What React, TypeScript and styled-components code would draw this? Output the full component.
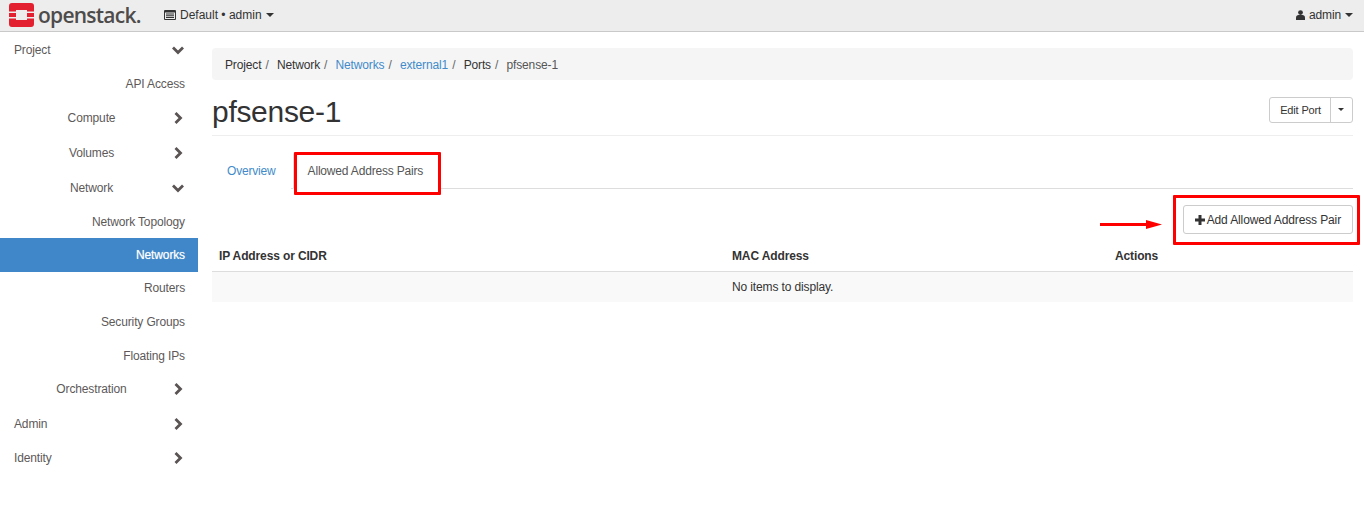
import React from 'react'
import styled, { createGlobalStyle } from 'styled-components'

const GlobalStyle = createGlobalStyle`
  html, body {
    margin: 0;
    padding: 0;
    background: #fff;
    font-family: "Liberation Sans", Arial, sans-serif;
    font-size: 12px;
    letter-spacing: -0.13px;
    color: #333;
  }
  * { box-sizing: border-box; }
`

const Page = styled.div`
  position: relative;
  width: 1364px;
  height: 523px;
  overflow: hidden;
`

const Navbar = styled.header`
  display: flex;
  align-items: center;
  height: 32px;
  padding: 0 11px 2px 9px;
  background: #ededed;
  border-bottom: 1px solid #c9c9c9;
`

const Brand = styled.div`
  display: flex;
  align-items: center;
  gap: 4px;
  width: 155px;
`

const BrandName = styled.span`
  font-family: "Open Sans", sans-serif;
  font-size: 21px;
  font-weight: 600;
  line-height: 28px;
  letter-spacing: -0.75px;
  color: #4e4b4b;
`

const NavMenu = styled.div<{ $push?: boolean }>`
  display: flex;
  align-items: center;
  gap: 4px;
  margin-left: ${(p) => (p.$push ? 'auto' : '0')};
  font-size: 12px;
  color: #333;
`

const ProjectLabel = styled.span`
  letter-spacing: 0;
`

const Caret = styled.span`
  display: inline-block;
  width: 0;
  height: 0;
  border-top: 4px solid #333;
  border-left: 4px solid transparent;
  border-right: 4px solid transparent;
`

const Body = styled.div`
  display: flex;
  align-items: flex-start;
`

const Sidebar = styled.nav`
  width: 198px;
  flex: none;
  padding-top: 1px;
`

const SideItem = styled.div<{ $level: number; $active?: boolean; $h: number }>`
  position: relative;
  height: ${(p) => p.$h}px;
  display: flex;
  align-items: center;
  width: 198px;
  padding-left: ${(p) => (p.$level === 0 ? '14px' : '0')};
  padding-right: ${(p) => (p.$level === 1 ? '15px' : '13px')};
  justify-content: ${(p) =>
    p.$level === 0 ? 'flex-start' : p.$level === 1 ? 'center' : 'flex-end'};
  color: ${(p) => (p.$active ? '#fff' : '#5d5959')};
  text-shadow: ${(p) => (p.$active ? '0 0 1px rgba(255, 255, 255, 0.6)' : 'none')};
  background: ${(p) => (p.$active ? '#3f87c8' : 'transparent')};
`

const Chevron = styled.svg`
  position: absolute;
  right: 14px;
  top: 50%;
  margin-top: -6px;
  width: 12px;
  height: 12px;
  fill: none;
  stroke: #5a5454;
  stroke-width: 2.8;
`

const Main = styled.main`
  flex: 1;
  min-width: 0;
  padding: 16px 11px 0 14px;
`

const Breadcrumb = styled.ol`
  display: flex;
  align-items: center;
  height: 32px;
  margin: 0;
  padding: 1px 13px 0;
  list-style: none;
  background: #f5f5f5;
  border-radius: 4px;
`

const Crumb = styled.li<{ $link?: boolean; $muted?: boolean }>`
  color: ${(p) => (p.$link ? '#428bca' : p.$muted ? '#555' : '#333')};
  &:not(:last-child)::after {
    content: '/';
    color: #666;
    margin: 0 8.25px 0 4px;
  }
`

const TitleRow = styled.div`
  display: flex;
  align-items: center;
  justify-content: space-between;
  height: 56px;
  border-bottom: 1px solid #eee;
`

const Title = styled.h1`
  margin: 8px 0 0;
  font-size: 30px;
  font-weight: 400;
  line-height: 33px;
  letter-spacing: -0.3px;
  color: #333;
`

const SplitButton = styled.div`
  display: flex;
  height: 26px;
  margin-top: 4px;
  border: 1px solid #ccc;
  border-radius: 3px;
  background: #fff;
`

const SplitLabel = styled.span`
  display: flex;
  align-items: center;
  padding: 0 9px 0 10px;
  font-size: 11px;
  letter-spacing: -0.15px;
  border-right: 1px solid #ccc;
`

const SplitCaret = styled.span`
  display: flex;
  align-items: center;
  padding: 0 8px 0 7px;
  ${Caret} {
    border-top-width: 3px;
    border-left-width: 3px;
    border-right-width: 3px;
  }
`

const Tabs = styled.div`
  display: flex;
  height: 37px;
  margin-top: 16px;
  border-bottom: 1px solid #ddd;
  letter-spacing: -0.18px;
`

const Tab = styled.div<{ $active?: boolean }>`
  display: flex;
  align-items: center;
  height: 37px;
  padding: 0 15px 0 ${(p) => (p.$active ? '14px' : '15px')};
  color: ${(p) => (p.$active ? '#555' : '#428bca')};
  background: #fff;
  margin-left: ${(p) => (p.$active ? '2px' : '0')};
  border: ${(p) => (p.$active ? '1px solid #ddd' : 'none')};
  border-bottom: ${(p) => (p.$active ? '1px solid #fff' : 'none')};
  border-radius: 3px 3px 0 0;
`

const Actions = styled.div`
  display: flex;
  justify-content: flex-end;
  height: 50px;
  padding-top: 16px;
`

const ActionButton = styled.button`
  display: flex;
  align-items: center;
  gap: 2px;
  height: 29px;
  padding: 0 11px;
  font: 400 12px "Liberation Sans", Arial, sans-serif;
  letter-spacing: -0.13px;
  color: #333;
  background: #fff;
  border: 1px solid #ccc;
  border-radius: 3px;
`

const Table = styled.table`
  width: 100%;
  table-layout: fixed;
  border-collapse: collapse;
`

const Th = styled.th<{ $w: number }>`
  width: ${(p) => p.$w}px;
  height: 32px;
  padding: 2px 7px 0;
  font-size: 12px;
  font-weight: 700;
  text-align: left;
  color: #333;
  border-bottom: 1px solid #ddd;
`

const EmptyCell = styled.td`
  height: 31px;
  padding: 0 7px;
  background: #f9f9f9;
`

const EmptyText = styled.span`
  display: block;
  margin-left: 513px;
  white-space: nowrap;
`

const Highlight = styled.div<{ $x: number; $y: number; $w: number; $h: number }>`
  position: absolute;
  left: ${(p) => p.$x}px;
  top: ${(p) => p.$y}px;
  width: ${(p) => p.$w}px;
  height: ${(p) => p.$h}px;
  border: 3px solid #fe0000;
  border-radius: 1px;
  pointer-events: none;
`

const ArrowMark = styled.svg`
  position: absolute;
  left: 1100px;
  top: 219px;
  width: 62px;
  height: 12px;
`

const Logo = () => (
  <svg width="25" height="24" viewBox="0 0 25 24">
    <path
      fill="#e2202f"
      d="M3 0H22a3 3 0 0 1 3 3V8.500H18V7H7V8.500H0V3a3 3 0 0 1 3-3ZM0 10H7V14H0ZM18 10H25V14H18ZM0 15.500H7V17H18V15.500H25V21a3 3 0 0 1-3 3H3a3 3 0 0 1-3-3Z"
    />
  </svg>
)

const ProjectIcon = () => (
  <svg width="12" height="10" viewBox="0 0 12 10">
    <path
      fill="#333"
      fillRule="evenodd"
      d="M1 0H11a1 1 0 0 1 1 1V9a1 1 0 0 1-1 1H1a1 1 0 0 1-1-1V1a1 1 0 0 1 1-1ZM1 2.500V9H11V2.500ZM2 3.500H10V4.500H2ZM2 5.300H10V6.300H2ZM2 7H10V8H2Z"
    />
  </svg>
)

const UserIcon = () => (
  <svg width="9" height="10" viewBox="0 0 9 10">
    <circle cx="4.500" cy="2.600" r="2.400" fill="#333" />
    <path fill="#333" d="M0 10V7.500C0 6 1.200 5 2.500 5H6.500C7.800 5 9 6 9 7.500V10Z" />
  </svg>
)

const PlusIcon = () => (
  <svg width="10" height="10" viewBox="0 0 10 10">
    <path fill="#333" d="M3.500 0H6.500V3.500H10V6.500H6.500V10H3.500V6.500H0V3.500H3.500Z" />
  </svg>
)

type MenuRow = {
  label: string
  level: number
  h: number
  chevron?: 'down' | 'right'
  active?: boolean
}

const menu: MenuRow[] = [
  { label: 'Project', level: 0, h: 34, chevron: 'down' },
  { label: 'API Access', level: 2, h: 34 },
  { label: 'Compute', level: 1, h: 34, chevron: 'right' },
  { label: 'Volumes', level: 1, h: 36, chevron: 'right' },
  { label: 'Network', level: 1, h: 34, chevron: 'down' },
  { label: 'Network Topology', level: 2, h: 33 },
  { label: 'Networks', level: 2, h: 34, active: true },
  { label: 'Routers', level: 2, h: 32 },
  { label: 'Security Groups', level: 2, h: 36 },
  { label: 'Floating IPs', level: 2, h: 31 },
  { label: 'Orchestration', level: 1, h: 35, chevron: 'right' },
  { label: 'Admin', level: 0, h: 36, chevron: 'right' },
  { label: 'Identity', level: 0, h: 32, chevron: 'right' }
]

export default function App() {
  return (
    <Page>
      <GlobalStyle />
      <Navbar>
        <Brand>
          <Logo />
          <BrandName>openstack.</BrandName>
        </Brand>
        <NavMenu>
          <ProjectIcon />
          <ProjectLabel>Default • admin</ProjectLabel>
          <Caret />
        </NavMenu>
        <NavMenu $push>
          <UserIcon />
          <span>admin</span>
          <Caret />
        </NavMenu>
      </Navbar>
      <Body>
        <Sidebar>
          {menu.map((row) => (
            <SideItem key={row.label} $level={row.level} $active={row.active} $h={row.h}>
              {row.label}
              {row.chevron && (
                <Chevron viewBox="0 0 12 12">
                  <path d={row.chevron === 'down' ? 'M1 3.500L6 8.500L11 3.500' : 'M3.500 1L8.500 6L3.500 11'} />
                </Chevron>
              )}
            </SideItem>
          ))}
        </Sidebar>
        <Main>
          <Breadcrumb>
            <Crumb>Project</Crumb>
            <Crumb>Network</Crumb>
            <Crumb $link>Networks</Crumb>
            <Crumb $link>external1</Crumb>
            <Crumb>Ports</Crumb>
            <Crumb $muted>pfsense-1</Crumb>
          </Breadcrumb>
          <TitleRow>
            <Title>pfsense-1</Title>
            <SplitButton>
              <SplitLabel>Edit Port</SplitLabel>
              <SplitCaret>
                <Caret />
              </SplitCaret>
            </SplitButton>
          </TitleRow>
          <Tabs>
            <Tab>Overview</Tab>
            <Tab $active>Allowed Address Pairs</Tab>
          </Tabs>
          <Actions>
            <ActionButton>
              <PlusIcon />
              Add Allowed Address Pair
            </ActionButton>
          </Actions>
          <Table>
            <thead>
              <tr>
                <Th $w={513}>IP Address or CIDR</Th>
                <Th $w={383}>MAC Address</Th>
                <Th $w={245}>Actions</Th>
              </tr>
            </thead>
            <tbody>
              <tr>
                <EmptyCell colSpan={3}>
                  <EmptyText>No items to display.</EmptyText>
                </EmptyCell>
              </tr>
            </tbody>
          </Table>
        </Main>
      </Body>
      <Highlight $x={294} $y={152} $w={147} $h={43} />
      <Highlight $x={1173} $y={195} $w={187} $h={50} />
      <ArrowMark viewBox="0 0 62 12">
        <rect x="0" y="4" width="46" height="3" fill="#fe0000" />
        <path d="M46 1L62 5.500L46 10Z" fill="#fe0000" />
      </ArrowMark>
    </Page>
  )
}
